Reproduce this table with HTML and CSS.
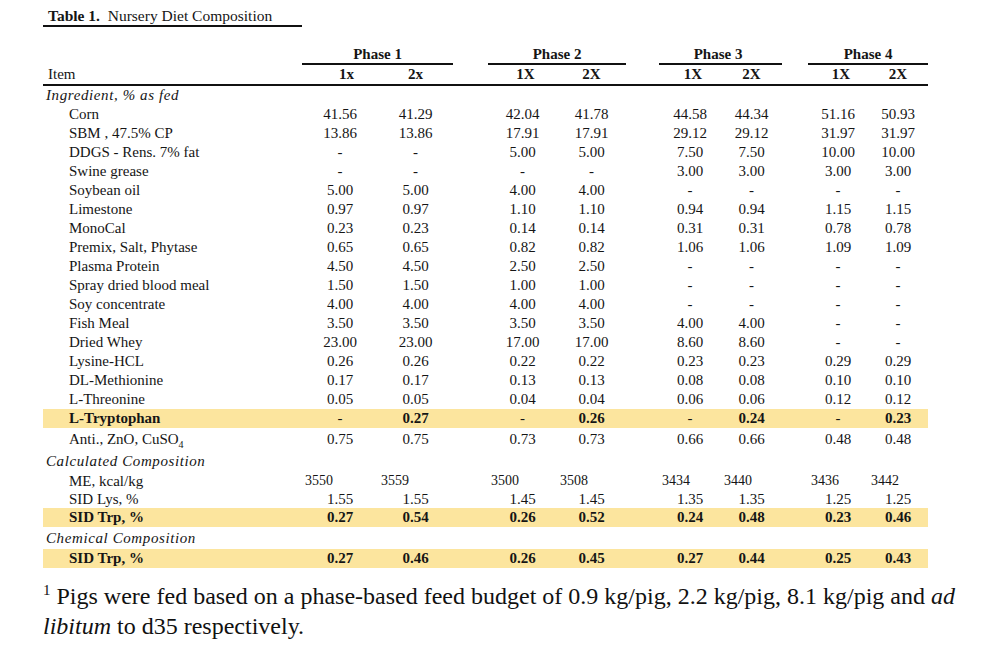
FILE: index.html
```html
<!DOCTYPE html>
<html>
<head>
<meta charset="utf-8">
<link rel="stylesheet" href="styles.css">
</head>
<body>
<div class="page">
  <div class="title"><b>Table 1.</b>&nbsp; Nursery Diet Composition</div>
  <table class="diet">
    <colgroup>
      <col class="w-item">
      <col class="w-p1a"><col class="w-p1b"><col class="w-g1">
      <col class="w-p2"><col class="w-p2"><col class="w-g2">
      <col class="w-p3a"><col class="w-p3b"><col class="w-g3">
      <col class="w-p4"><col class="w-p4">
    </colgroup>
    <thead>
      <tr class="phase-row">
        <th></th><th colspan="2" class="phase">Phase 1</th><th></th>
        <th colspan="2" class="phase">Phase 2</th><th></th>
        <th colspan="2" class="phase p3">Phase 3</th><th></th>
        <th colspan="2" class="phase">Phase 4</th>
      </tr>
      <tr class="head-row">
        <th class="item-head">Item</th>
        <th class="sub first p1">1x</th><th class="sub">2x</th><th></th>
        <th class="sub first">1X</th><th class="sub">2X</th><th></th>
        <th class="sub first">1X</th><th class="sub">2X</th><th></th>
        <th class="sub first">1X</th><th class="sub">2X</th>
      </tr>
    </thead>
    <tbody>
      <tr><td class="section" colspan="12">Ingredient, % as fed</td></tr>
      <tr><td class="lbl">Corn</td><td>41.56</td><td>41.29</td><td></td><td>42.04</td><td>41.78</td><td></td><td>44.58</td><td>44.34</td><td></td><td>51.16</td><td>50.93</td></tr>
      <tr><td class="lbl">SBM , 47.5% CP</td><td>13.86</td><td>13.86</td><td></td><td>17.91</td><td>17.91</td><td></td><td>29.12</td><td>29.12</td><td></td><td>31.97</td><td>31.97</td></tr>
      <tr><td class="lbl">DDGS - Rens. 7% fat</td><td>-</td><td>-</td><td></td><td>5.00</td><td>5.00</td><td></td><td>7.50</td><td>7.50</td><td></td><td>10.00</td><td>10.00</td></tr>
      <tr><td class="lbl">Swine grease</td><td>-</td><td>-</td><td></td><td>-</td><td>-</td><td></td><td>3.00</td><td>3.00</td><td></td><td>3.00</td><td>3.00</td></tr>
      <tr><td class="lbl">Soybean oil</td><td>5.00</td><td>5.00</td><td></td><td>4.00</td><td>4.00</td><td></td><td>-</td><td>-</td><td></td><td>-</td><td>-</td></tr>
      <tr><td class="lbl">Limestone</td><td>0.97</td><td>0.97</td><td></td><td>1.10</td><td>1.10</td><td></td><td>0.94</td><td>0.94</td><td></td><td>1.15</td><td>1.15</td></tr>
      <tr><td class="lbl">MonoCal</td><td>0.23</td><td>0.23</td><td></td><td>0.14</td><td>0.14</td><td></td><td>0.31</td><td>0.31</td><td></td><td>0.78</td><td>0.78</td></tr>
      <tr><td class="lbl">Premix, Salt, Phytase</td><td>0.65</td><td>0.65</td><td></td><td>0.82</td><td>0.82</td><td></td><td>1.06</td><td>1.06</td><td></td><td>1.09</td><td>1.09</td></tr>
      <tr><td class="lbl">Plasma Protein</td><td>4.50</td><td>4.50</td><td></td><td>2.50</td><td>2.50</td><td></td><td>-</td><td>-</td><td></td><td>-</td><td>-</td></tr>
      <tr><td class="lbl">Spray dried blood meal</td><td>1.50</td><td>1.50</td><td></td><td>1.00</td><td>1.00</td><td></td><td>-</td><td>-</td><td></td><td>-</td><td>-</td></tr>
      <tr><td class="lbl">Soy concentrate</td><td>4.00</td><td>4.00</td><td></td><td>4.00</td><td>4.00</td><td></td><td>-</td><td>-</td><td></td><td>-</td><td>-</td></tr>
      <tr><td class="lbl">Fish Meal</td><td>3.50</td><td>3.50</td><td></td><td>3.50</td><td>3.50</td><td></td><td>4.00</td><td>4.00</td><td></td><td>-</td><td>-</td></tr>
      <tr><td class="lbl">Dried Whey</td><td>23.00</td><td>23.00</td><td></td><td>17.00</td><td>17.00</td><td></td><td>8.60</td><td>8.60</td><td></td><td>-</td><td>-</td></tr>
      <tr><td class="lbl">Lysine-HCL</td><td>0.26</td><td>0.26</td><td></td><td>0.22</td><td>0.22</td><td></td><td>0.23</td><td>0.23</td><td></td><td>0.29</td><td>0.29</td></tr>
      <tr><td class="lbl">DL-Methionine</td><td>0.17</td><td>0.17</td><td></td><td>0.13</td><td>0.13</td><td></td><td>0.08</td><td>0.08</td><td></td><td>0.10</td><td>0.10</td></tr>
      <tr><td class="lbl">L-Threonine</td><td>0.05</td><td>0.05</td><td></td><td>0.04</td><td>0.04</td><td></td><td>0.06</td><td>0.06</td><td></td><td>0.12</td><td>0.12</td></tr>
      <tr class="hl"><td class="lbl strong">L-Tryptophan</td><td>-</td><td class="strong">0.27</td><td></td><td>-</td><td class="strong">0.26</td><td></td><td>-</td><td class="strong">0.24</td><td></td><td>-</td><td class="strong">0.23</td></tr>
      <tr class="r22"><td class="lbl">Anti., ZnO, CuSO<sub>4</sub></td><td>0.75</td><td>0.75</td><td></td><td>0.73</td><td>0.73</td><td></td><td>0.66</td><td>0.66</td><td></td><td>0.48</td><td>0.48</td></tr>
      <tr class="r21"><td class="section" colspan="12">Calculated Composition</td></tr>
      <tr class="r18"><td class="lbl">ME, kcal/kg</td><td class="me">3550</td><td class="me">3559</td><td></td><td class="me">3500</td><td class="me">3508</td><td></td><td class="me">3434</td><td class="me">3440</td><td></td><td class="me">3436</td><td class="me">3442</td></tr>
      <tr class="r18"><td class="lbl">SID Lys, %</td><td>1.55</td><td>1.55</td><td></td><td>1.45</td><td>1.45</td><td></td><td>1.35</td><td>1.35</td><td></td><td>1.25</td><td>1.25</td></tr>
      <tr class="hl strong"><td class="lbl">SID Trp, %</td><td>0.27</td><td>0.54</td><td></td><td>0.26</td><td>0.52</td><td></td><td>0.24</td><td>0.48</td><td></td><td>0.23</td><td>0.46</td></tr>
      <tr class="r21"><td class="section" colspan="12">Chemical Composition</td></tr>
      <tr class="hl strong"><td class="lbl">SID Trp, %</td><td>0.27</td><td>0.46</td><td></td><td>0.26</td><td>0.45</td><td></td><td>0.27</td><td>0.44</td><td></td><td>0.25</td><td>0.43</td></tr>
    </tbody>
  </table>
  <p class="footnote"><sup>1</sup> Pigs were fed based on a phase-based feed budget of 0.9 kg/pig, 2.2 kg/pig, 8.1 kg/pig and <i>ad</i><br><i>libitum</i> to d35 respectively.</p>
</div>
</body>
</html>
```
FILE: styles.css
```css
html, body {
  margin: 0;
  padding: 0;
  background: #ffffff;
}

body {
  font-family: "Liberation Serif", "Times New Roman", serif;
  color: #151515;
}

.page {
  padding: 7px 0 0 43px;
}

.title {
  width: 254px;
  padding-left: 5px;
  font-family: "Liberation Serif", "Times New Roman", serif;
  font-size: 15.5px;
  line-height: 18px;
  height: 18px;
  border-bottom: 2px solid #111;
}

.title b {
  font-weight: bold;
}

.diet {
  margin-top: 17px;
  border-collapse: separate;
  border-spacing: 0;
  table-layout: fixed;
  width: 885px;
  font-family: "Liberation Serif", "Times New Roman", serif;
  font-size: 15px;
}

.w-item { width: 259px; }
.w-p1a { width: 76px; }
.w-p1b { width: 75px; }
.w-g1 { width: 35px; }
.w-p2 { width: 69px; }
.w-g2 { width: 33px; }
.w-p3a { width: 62px; }
.w-p3b { width: 61px; }
.w-g3 { width: 26px; }
.w-p4 { width: 60px; }

.diet th,
.diet td {
  padding: 0;
  height: 19px;
  line-height: 19px;
  text-align: center;
  white-space: nowrap;
  overflow: visible;
}

.phase-row th {
  font-weight: bold;
  vertical-align: bottom;
  line-height: 17px;
}

.phase-row th.phase {
  border-bottom: 2px solid #111;
}

.phase-row th.p3 {
  padding-right: 5px;
}

.head-row th {
  font-weight: bold;
  border-bottom: 2px solid #111;
}

.head-row th.item-head {
  text-align: left;
  padding-left: 5px;
  font-weight: normal;
}

.head-row th.first {
  padding-left: 6px;
}

.head-row th.first.p1 {
  padding-left: 13px;
}

.diet td.section {
  text-align: left;
  padding-left: 3px;
  font-style: italic;
  letter-spacing: 0.6px;
}

.diet td.lbl {
  text-align: left;
  padding-left: 26px;
}

.diet td.me {
  text-align: left;
  padding-left: 3px;
  font-size: 14px;
}

.hl td {
  background: #fce59e;
}

.strong,
.strong td {
  font-weight: bold;
}

.r22 td {
  height: 22px;
  line-height: 22px;
}

.r21 td {
  height: 21px;
  line-height: 22px;
}

.r18 td {
  height: 18px;
  line-height: 18px;
}

sub {
  font-size: 10px;
  line-height: 0;
}

.footnote {
  margin: 13px 0 0 0;
  font-family: "Liberation Serif", "Times New Roman", serif;
  font-size: 24px;
  line-height: 30px;
  white-space: nowrap;
  color: #111;
}

.footnote sup {
  font-size: 15px;
  line-height: 0;
  vertical-align: 9px;
}
```
